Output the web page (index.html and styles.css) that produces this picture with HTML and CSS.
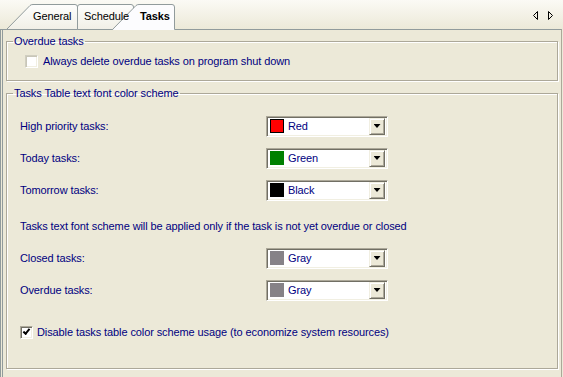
FILE: index.html
```html
<!DOCTYPE html>
<html lang="en">
<head>
    <meta charset="UTF-8">
    <title>Tasks options</title>
    <link rel="stylesheet" href="styles.css">
</head>
<body>
    <div class="tabbar">
        <svg class="tabshapes" width="563" height="30" viewBox="0 0 563 30">
            <defs>
                <linearGradient id="tabfill" x1="0" y1="0" x2="0" y2="1">
                    <stop offset="0" stop-color="#fefefd"/>
                    <stop offset="1" stop-color="#f1efe6"/>
                </linearGradient>
            </defs>
            <!-- General -->
            <path d="M6.5,29.5 L30,5.5 Q31,4.5 33,4.5 L75,4.5 Q77.5,4.5 77.5,7 L77.5,29.5 Z" fill="url(#tabfill)" stroke="#919b9c"/>
            <!-- Schedule -->
            <path d="M77.5,29.5 L77.5,7 Q77.5,4.5 80,4.5 L131,4.5 Q133.5,4.5 133.5,7 L133.5,29.5 Z" fill="url(#tabfill)" stroke="#919b9c"/>
            <!-- Tasks (active) -->
            <path d="M112.5,30 L136,5.5 Q137,4.5 139,4.5 L172,4.5 Q174.5,4.5 174.5,7 L174.5,30 Z" fill="#fcfcfe"/>
            <path d="M112.5,29.5 L136,5.5 Q137,4.5 139,4.5 L172,4.5 Q174.5,4.5 174.5,7 L174.5,29.5" fill="none" stroke="#919b9c"/>
            <!-- scroll arrows -->
            <polygon points="537.5,11.5 533.5,15.5 537.5,19.5" fill="none" stroke="#000"/>
            <polygon points="548.5,11.5 552.5,15.5 548.5,19.5" fill="none" stroke="#000"/>
        </svg>
        <div class="tab tab-general">General</div>
        <div class="tab tab-schedule">Schedule</div>
        <div class="tab tab-active">Tasks</div>
    </div>

    <div class="page">
        <fieldset class="group group-overdue">
            <legend>Overdue tasks</legend>
            <label class="checkItem checkItem-top">
                <input type="checkbox" class="checkbox" />
                Always delete overdue tasks on program shut down
            </label>
        </fieldset>

        <fieldset class="group group-colors">
            <legend>Tasks Table text font color scheme</legend>
            <div class="rows">
                <div class="row">
                    <span class="label">High priority tasks:</span>
                    <div class="combo"><span class="swatch swatch-red"></span><span class="combo-text">Red</span><span class="combo-btn"></span></div>
                </div>
                <div class="row">
                    <span class="label">Today tasks:</span>
                    <div class="combo"><span class="swatch swatch-green"></span><span class="combo-text">Green</span><span class="combo-btn"></span></div>
                </div>
                <div class="row">
                    <span class="label">Tomorrow tasks:</span>
                    <div class="combo"><span class="swatch swatch-black"></span><span class="combo-text">Black</span><span class="combo-btn"></span></div>
                </div>
                <div class="row row-note">
                    <span class="label">Tasks text font scheme will be applied only if the task is not yet overdue or closed</span>
                </div>
                <div class="row">
                    <span class="label">Closed tasks:</span>
                    <div class="combo"><span class="swatch swatch-gray"></span><span class="combo-text">Gray</span><span class="combo-btn"></span></div>
                </div>
                <div class="row">
                    <span class="label">Overdue tasks:</span>
                    <div class="combo"><span class="swatch swatch-gray"></span><span class="combo-text">Gray</span><span class="combo-btn"></span></div>
                </div>
                <label class="checkItem checkItem-bottom">
                    <input type="checkbox" class="checkbox" checked />
                    Disable tasks table color scheme usage (to economize system resources)
                </label>
            </div>
        </fieldset>
    </div>
</body>
</html>
```

FILE: styles.css
```css
body {
    margin: 0;
    width: 563px;
    height: 377px;
    overflow: hidden;
    background-color: #ece9d8;
    font-family: "Liberation Sans", Arial, sans-serif;
    font-size: 11px;
    letter-spacing: -0.1px;
    color: #000080;
}

/* tab strip */
.tabbar {
    position: relative;
    z-index: 1;
    height: 29px;
    display: flex;
    padding-left: 33px;
    background: linear-gradient(#fbfaf5, #ece9d8);
}

.tabshapes {
    position: absolute;
    left: 0;
    top: 0;
}

.tab {
    position: relative;
    padding-top: 10px;
    line-height: 13px;
    color: #000000;
}

.tab-general {
    width: 51px;
}

.tab-schedule {
    width: 56px;
}

.tab-active {
    font-weight: bold;
}

/* page */
.page {
    box-sizing: border-box;
    width: 562px;
    height: 348px;
    border-top: 1px solid #919b9c;
    border-left: 3px double #919b9c;
    border-right: 1px solid #aca899;
}

.group {
    box-sizing: border-box;
    width: 552px;
    min-width: 0;
    margin: 0 0 0 3px;
    padding: 0;
    border: 1px solid #aca899;
    box-shadow: inset 1px 1px #ffffff, 1px 1px #ffffff;
}

.group legend {
    margin-left: 6px;
    padding: 0 1px;
    line-height: 13px;
}

.group-overdue {
    margin-top: 5px;
    height: 46px;
}

.group-colors {
    margin-top: 6px;
    height: 282px;
}

/* checkbox */
.checkItem {
    display: flex;
    align-items: center;
    column-gap: 5px;
    height: 26px;
}

.checkItem-top {
    padding-left: 18px;
}

.checkItem-bottom {
    margin-top: 10px;
    height: 32px;
    column-gap: 4px;
}

.checkbox {
    appearance: none;
    position: relative;
    box-sizing: border-box;
    width: 13px;
    height: 13px;
    margin: 0;
    background-color: #ffffff;
    border: 1px solid;
    border-color: #aca899 #ffffff #ffffff #aca899;
    box-shadow: inset 1px 1px #716f64, inset -1px -1px #f1efe2;
}

.checkItem-top .checkbox {
    border-color: #d0cec0 #ffffff #ffffff #d0cec0;
    box-shadow: inset 1px 1px #c8c6b8, inset -1px -1px #f1efe2;
}

.checkbox:checked::after {
    content: "";
    position: absolute;
    top: 2px;
    left: 2px;
    width: 5px;
    height: 2px;
    border-left: 2px solid #000000;
    border-bottom: 2px solid #000000;
    transform: rotate(-50deg);
}

/* color rows */
.rows {
    display: flex;
    flex-direction: column;
    padding: 10px 0 0 13px;
}

.row {
    display: flex;
    align-items: center;
    height: 32px;
}

.row-note {
    margin-top: 4px;
}

.label {
    width: 246px;
    flex: none;
    white-space: nowrap;
}

.combo {
    box-sizing: border-box;
    display: flex;
    align-items: center;
    width: 122px;
    height: 21px;
    padding-left: 3px;
    background-color: #ffffff;
    border: 1px solid;
    border-color: #aca899 #ffffff #ffffff #aca899;
    box-shadow: inset 1px 1px #716f64, inset -1px -1px #f1efe2;
}

.swatch {
    box-sizing: border-box;
    width: 14px;
    height: 14px;
    border: 1px solid;
}

.swatch-red {
    background-color: #ff0000;
    border-color: #000000;
}

.swatch-green {
    background-color: #008000;
    border-color: #008000;
}

.swatch-black {
    background-color: #000000;
    border-color: #000000;
}

.swatch-gray {
    background-color: #868287;
    border-color: #868287;
}

.combo-text {
    flex: 1;
    margin-left: 4px;
}

.combo-btn {
    box-sizing: border-box;
    display: flex;
    align-items: center;
    justify-content: center;
    width: 16px;
    height: 17px;
    margin-right: 2px;
    background-color: #ece9d8;
    border: 1px solid;
    border-color: #f1efe2 #716f64 #716f64 #f1efe2;
    box-shadow: inset 1px 1px #ffffff, inset -1px -1px #aca899;
}

.combo-btn::after {
    content: "";
    width: 7px;
    height: 4px;
    background-color: #000000;
    clip-path: polygon(0 0, 100% 0, 50% 100%);
}
```
